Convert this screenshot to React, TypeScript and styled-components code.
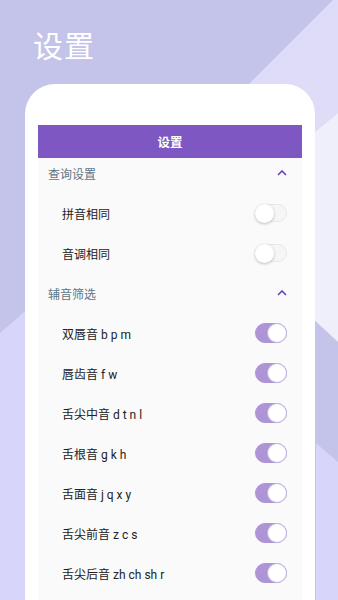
import React, { useState } from "react"
import styled, { createGlobalStyle } from "styled-components"

const GlobalStyle = createGlobalStyle`
    html, body {
        margin: 0;
        padding: 0;
        background: #c4c3e9;
    }
    body {
        font-family: Roboto, "Noto Sans CJK SC", sans-serif;
    }
    * { box-sizing: border-box; }
`

const Screen = styled.div`
    position: relative;
    width: 338px;
    height: 600px;
    overflow: hidden;
    background: #c4c3e9;
`

const Backdrop = styled.svg`
    position: absolute;
    top: 0;
    left: 0;
    width: 338px;
    height: 600px;
`

const Content = styled.div`
    position: relative;
    display: flex;
    flex-direction: column;
    height: 100%;
`

const PageTitle = styled.h1`
    margin: 0;
    padding: 28px 0 0 33px;
    height: 84px;
    font-size: 30px;
    line-height: 38px;
    font-weight: 400;
    color: #ffffff;
    letter-spacing: 1px;
`

const Phone = styled.div`
    flex: 1;
    margin: 0 23px 0 25px;
    background: #ffffff;
    border-radius: 30px 30px 0 0;
    padding: 41px 13px 0 13px;
`

const Panel = styled.div`
    background: #fafafa;
    height: 100%;
`

const PanelHeader = styled.div`
    height: 33px;
    background: #7e57c2;
    color: #ffffff;
    font-size: 12.5px;
    font-weight: 700;
    display: flex;
    align-items: center;
    justify-content: center;
`

const SectionRow = styled.div`
    height: 30px;
    display: flex;
    align-items: center;
    justify-content: space-between;
    padding: 0 15px 0 10px;
    font-size: 12px;
    color: #5f7585;
`

const Group = styled.div`
    padding: 5px 0;
`

const Row = styled.div`
    height: 40px;
    display: flex;
    align-items: center;
    justify-content: space-between;
    padding: 0 15px 0 24px;
    font-size: 12px;
    color: #222222;
`

const Track = styled.button<{ $on: boolean }>`
    position: relative;
    width: 32px;
    height: ${p => (p.$on ? "20px" : "18px")};
    border-radius: 10px;
    border: 1px solid ${p => (p.$on ? "#ad95d6" : "#e8e8e8")};
    background: ${p => (p.$on ? "#ad95d6" : "#f6f6f6")};
    padding: 0;
    cursor: pointer;
`

const Thumb = styled.span<{ $on: boolean }>`
    position: absolute;
    top: ${p => (p.$on ? "0px" : "-1px")};
    left: ${p => (p.$on ? "12px" : "-1px")};
    width: ${p => (p.$on ? "18px" : "19px")};
    height: ${p => (p.$on ? "18px" : "19px")};
    border-radius: 50%;
    background: #ffffff;
    box-shadow: ${p => (p.$on ? "0 0 0 1px #c8b8e6" : "0 1px 3px rgba(0,0,0,0.25)")};
`

const Toggle = ({ initial }: { initial: boolean }) => {
    const [on, setOn] = useState(initial)
    return (
        <Track $on={on} onClick={() => setOn(!on)}>
            <Thumb $on={on} />
        </Track>
    )
}

const Chevron = () => (
    <svg width="10" height="6" viewBox="0 0 10 6">
        <path d="M1 5 L5 1 L9 5" fill="none" stroke="#6a3fc0" strokeWidth="1.6" />
    </svg>
)

const querySettings = ["拼音相同", "音调相同"]

const consonants = [
    "双唇音 b p m",
    "唇齿音 f w",
    "舌尖中音 d t n l",
    "舌根音 g k h",
    "舌面音 j q x y",
    "舌尖前音 z c s",
    "舌尖后音 zh ch sh r",
]

export default function App() {
    return (
        <>
            <GlobalStyle />
            <Screen>
                <Backdrop viewBox="0 0 338 600">
                    <polygon points="333,0 338,0 338,113 200,226 200,133" fill="#dedcf7" />
                    <polygon points="338,113 240,193 240,251 338,342" fill="#efeefb" />
                    <polygon points="316,443 338,462 338,600 316,600" fill="#d8d5fb" />
                    <polygon points="0,333 24,312 60,312 60,600 0,600" fill="#d8d5fb" />
                </Backdrop>
                <Content>
                    <PageTitle>设置</PageTitle>
                    <Phone>
                        <Panel>
                            <PanelHeader>设置</PanelHeader>
                            <SectionRow>
                                查询设置
                                <Chevron />
                            </SectionRow>
                            <Group>
                                {querySettings.map(label => (
                                    <Row key={label}>
                                        {label}
                                        <Toggle initial={false} />
                                    </Row>
                                ))}
                            </Group>
                            <SectionRow>
                                辅音筛选
                                <Chevron />
                            </SectionRow>
                            <Group>
                                {consonants.map(label => (
                                    <Row key={label}>
                                        {label}
                                        <Toggle initial={true} />
                                    </Row>
                                ))}
                            </Group>
                        </Panel>
                    </Phone>
                </Content>
            </Screen>
        </>
    )
}
